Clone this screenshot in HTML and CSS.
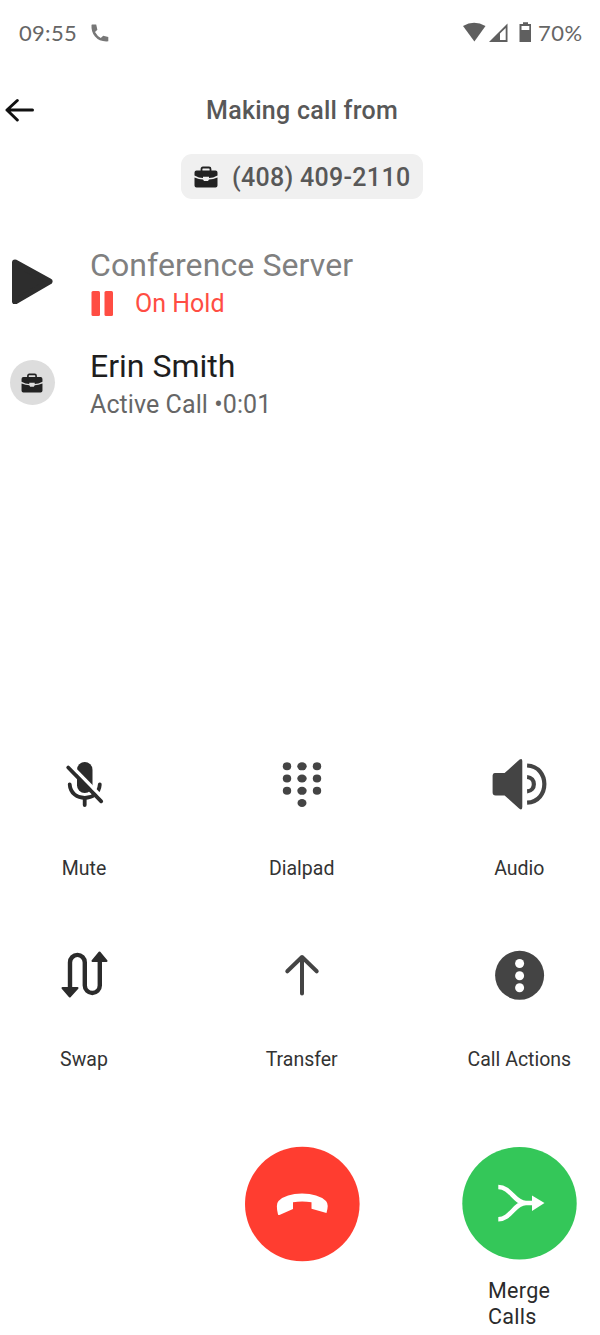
FILE: index.html
```html
<!DOCTYPE html>
<html lang="en">
<head>
<meta charset="utf-8">
<title>Call</title>
<link rel="stylesheet" href="styles.css">
</head>
<body>
<div class="screen">
  <div class="status">
    <div class="status-left">
      <span class="time">09:55</span>
      <svg class="phone" width="18" height="18" viewBox="0 0 18 18"><path d="M1 .5H5.200L6.400 5.800L4 8Q6.200 12 9.800 14L12.200 11.700L17.300 12.900V17.300Q8.500 18 4 12.500Q0 8 .5 1Z" fill="#777"/></svg>
    </div>
    <div class="status-right">
      <svg width="70" height="22" viewBox="462 22 70 22"><path d="M463 26Q474 19.500 485.500 26L474.400 41.500Z" fill="#5f5f5f"/><path d="M489 42L507.500 23.500V42Z" fill="#5f5f5f"/><path d="M500 33.500L505.700 28V40H500Z" fill="#fff"/><path d="M520 24H523V22.300H528V24H531V42H519.500V24Z" fill="#5f5f5f"/><path d="M521.500 26H529.300V30H521.500Z" fill="#fff"/></svg>
      <span class="percent">70%</span>
    </div>
  </div>
  <header class="header">
    <svg class="back" width="30" height="26" viewBox="5 96 30 26" fill="none" stroke="#111" stroke-width="3" stroke-linecap="round" stroke-linejoin="round"><path d="M32.500 109H7M17.300 99.500L7 109L17.300 119"/></svg>
    <h1 class="title">Making call from</h1>
  </header>
  <div class="chip">
    <svg width="24" height="22" viewBox="0 0 24 22"><path d="M7.500 5V3Q7.500 1.500 9 1.500H15Q16.500 1.500 16.500 3V5" fill="none" stroke="#222" stroke-width="1.800"/><path d="M2.500 4.500H21.500Q23.500 4.500 23.500 6.500V9.500Q19 12 15 12V10.800H9V12Q5 12 .5 9.500V6.500Q.5 4.500 2.500 4.500ZM.5 11.500Q5 13.300 9 13.500L10 15H14L15 13.500Q19 13.300 23.500 11.500V19.500Q23.500 21.500 21.500 21.500H2.500Q.5 21.500 .5 19.500Z" fill="#222"/></svg>
    <span class="number">(408) 409-2110</span>
  </div>
  <main class="calls">
    <div class="call">
      <div class="avatar"><svg class="play" width="44" height="46" viewBox="10 258 44 46"><path d="M15 262.500L49.500 281.500L15 301.500Z" fill="#2d2d2d" stroke="#2d2d2d" stroke-width="6" stroke-linejoin="round"/></svg></div>
      <div class="info">
        <div class="name held">Conference Server</div>
        <div class="hold"><svg width="24" height="27" viewBox="0 0 24 27" fill="#ff4d43"><rect x="1.500" y="1" width="8.500" height="25" rx="1.500"/><rect x="14.500" y="1" width="8.500" height="25" rx="1.500"/></svg><span class="hold-text">On Hold</span></div>
      </div>
    </div>
    <div class="call">
      <div class="avatar"><div class="badge"><svg width="22" height="20" viewBox="0 0 24 22"><path d="M7.500 5V3Q7.500 1.500 9 1.500H15Q16.500 1.500 16.500 3V5" fill="none" stroke="#222" stroke-width="1.800"/><path d="M2.500 4.500H21.500Q23.500 4.500 23.500 6.500V9.500Q19 12 15 12V10.800H9V12Q5 12 .5 9.500V6.500Q.5 4.500 2.500 4.500ZM.5 11.500Q5 13.300 9 13.500L10 15H14L15 13.500Q19 13.300 23.500 11.500V19.500Q23.500 21.500 21.500 21.500H2.500Q.5 21.500 .5 19.500Z" fill="#222"/></svg></div></div>
      <div class="info">
        <div class="name erin">Erin Smith</div>
        <div class="active">Active Call •0:01</div>
      </div>
    </div>
  </main>
  <section class="actions">
    <div class="action">
      <svg width="60" height="60" viewBox="54 755 60 60"><rect x="77" y="762" width="15.500" height="31" rx="7.700" fill="#2b2b2b"/><path d="M69.700 784.500C71 802.500 98.500 802.500 99.800 784.500M84.700 798V805" fill="none" stroke="#2b2b2b" stroke-width="3.800" stroke-linecap="round"/><path d="M70.500 765L103.500 798.700" stroke="#fff" stroke-width="3.500"/><path d="M68.200 767.500L101.200 801.300" stroke="#2b2b2b" stroke-width="3.800" stroke-linecap="round"/></svg>
      <span class="label mute">Mute</span>
    </div>
    <div class="action">
      <svg width="60" height="60" viewBox="272 755 60 60" fill="#444"><ellipse cx="287" cy="766.300" rx="4.200" ry="4"/><ellipse cx="302" cy="766.300" rx="4.700" ry="4"/><ellipse cx="317" cy="766.300" rx="4.200" ry="4"/><ellipse cx="287" cy="778.500" rx="4.200" ry="4"/><ellipse cx="302" cy="778.500" rx="4.700" ry="4"/><ellipse cx="317" cy="778.500" rx="4.200" ry="4"/><ellipse cx="287" cy="790.800" rx="4.200" ry="4"/><ellipse cx="302" cy="790.800" rx="4.700" ry="4"/><ellipse cx="317" cy="790.800" rx="4.200" ry="4"/><ellipse cx="302" cy="803" rx="4.500" ry="4"/></svg>
      <span class="label dialpad">Dialpad</span>
    </div>
    <div class="action">
      <svg width="60" height="60" viewBox="489.400 755 60 60"><path d="M495 773H505L520 759.500Q522.700 758 522.700 761V807Q522.700 811 519.500 808.500L505 795.500H496Q493 795.500 493 792.500V775.500Q493 773 495 773Z" fill="#444"/><path d="M527.500 765.500C550.500 766.500 550.500 801.700 527.500 802.700M527.500 777C536.500 777.500 536.500 790.800 527.500 791.300" fill="none" stroke="#444" stroke-width="4.200"/></svg>
      <span class="label audio">Audio</span>
    </div>
    <div class="action">
      <svg width="60" height="60" viewBox="54 945 60 60"><path d="M70 990V962.500A7.400 7.600 0 0 1 84.800 962.500V985.500A7.500 7.500 0 0 0 99.800 985.500V960" fill="none" stroke="#2b2b2b" stroke-width="4.400"/><path d="M62.500 988H77.500L69.800 996.500ZM92.500 961H106.500L99.500 952.500Z" fill="#2b2b2b" stroke="#2b2b2b" stroke-width="2" stroke-linejoin="round"/></svg>
      <span class="label swap">Swap</span>
    </div>
    <div class="action">
      <svg width="60" height="60" viewBox="272 945 60 60" fill="none" stroke="#444" stroke-width="4" stroke-linecap="round" stroke-linejoin="round"><path d="M302 993.500V957M287.300 971.300L302 957L316.700 971.300"/></svg>
      <span class="label transfer">Transfer</span>
    </div>
    <div class="action">
      <svg width="60" height="60" viewBox="489.400 945 60 60"><circle cx="520" cy="975.300" r="24.500" fill="#444"/><g fill="#fff"><circle cx="520" cy="963.500" r="4.500"/><circle cx="520" cy="975.700" r="4.500"/><circle cx="520" cy="987.800" r="4.500"/></g></svg>
      <span class="label more">Call Actions</span>
    </div>
  </section>
  <footer class="bottom">
    <div class="round">
      <svg width="116" height="116" viewBox="244 1146 116 116"><circle cx="302.300" cy="1204" r="57.300" fill="#ff3d30"/><path d="M278 1214.500Q275.500 1204 278.500 1201Q286 1193.500 302 1193.500Q318 1193.500 326 1201Q329 1204 326.500 1213L311.500 1208.700V1202.300Q302 1200.500 293 1202.300V1209L280 1214.700Q278.500 1215.500 278 1214.500Z" fill="#fff"/></svg>
    </div>
    <div class="round">
      <svg width="116" height="116" viewBox="461 1146 116 116"><ellipse cx="519.500" cy="1203.300" rx="57.200" ry="56.300" fill="#34c759"/><path d="M498.300 1187C511 1187 514 1203 526 1203H534M498.300 1219.300C511 1219.300 514 1203 526 1203" fill="none" stroke="#fff" stroke-width="4.600"/><path d="M532 1195.500L544.500 1203L532 1211Z" fill="#fff"/></svg>
      <span class="merge">Merge<br>Calls</span>
    </div>
  </footer>
</div>
</body>
</html>
```
FILE: styles.css
```css
* { box-sizing: border-box; }
body { margin: 0; background: #fff; font-family: Roboto, "Liberation Sans", sans-serif; }
svg { display: block; flex: none; }
.screen { width: 600px; height: 1335px; overflow: hidden; display: flex; flex-direction: column; background: #fff; }
.status { height: 66px; padding: 0 17px 0 19px; display: flex; justify-content: space-between; align-items: center; font-family: Lato, Roboto, sans-serif; color: #666; white-space: nowrap; }
.status-left, .status-right { display: flex; align-items: center; }
.time { font-size: 22px; line-height: 26px; width: 58px; letter-spacing: 0.3px; }
.phone { margin-left: 14px; }
.percent { font-size: 22px; line-height: 26px; margin-left: 6px; width: 45px; letter-spacing: 0.5px; }
.header { height: 88px; padding: 0 5px; display: grid; grid-template-columns: 30px 1fr 30px; align-items: center; }
.back { margin-top: -1px; }
.title { margin: 2px 0 0 4px; font-size: 25px; line-height: 34px; font-weight: 500; color: #585858; letter-spacing: 0.25px; text-align: center; white-space: nowrap; }
.chip { width: 242px; height: 45px; margin-left: 181px; padding-left: 13px; border-radius: 11px; background: #f0f0f0; display: flex; align-items: center; gap: 14px; }
.number { font-size: 25px; line-height: 34px; font-weight: 500; color: #585858; letter-spacing: 0.3px; white-space: nowrap; margin-top: 2px; }
.calls { height: 531px; padding: 45.500px 0 0 10px; display: flex; flex-direction: column; gap: 25.500px; }
.call { height: 76px; display: flex; gap: 36px; white-space: nowrap; }
.avatar { width: 44px; display: flex; justify-content: center; align-items: center; flex: none; }
.play { margin-top: -4px; }
.badge { width: 45px; height: 45px; border-radius: 50%; background: #ddd; display: flex; align-items: center; justify-content: center; flex: none; margin-top: -3px; }
.name { font-size: 32px; line-height: 40px; color: #1e1e1e; }
.held { color: #808080; letter-spacing: 0.1px; }
.hold { display: flex; align-items: center; gap: 21px; margin-top: 1.500px; height: 34px; color: #ff4d43; }
.hold-text, .active { font-size: 25px; line-height: 34px; }
.hold-text { margin-top: 1px; }
.active { margin-top: 2px; color: #666; letter-spacing: 0.08px; }
.actions { margin-left: 29px; height: 390px; padding-top: 25px; display: grid; grid-template-columns: repeat(3, 110px); grid-auto-rows: 130px; column-gap: 107.700px; row-gap: 60px; align-content: start; }
.action { display: flex; flex-direction: column; align-items: center; gap: 41px; }
.action:nth-child(n+4) { gap: 42px; }
.label { font-size: 19.500px; line-height: 26px; color: #333; white-space: nowrap; }
.bottom { margin: 26px 0 0 244px; display: flex; gap: 101px; }
.round { width: 116px; display: flex; flex-direction: column; }
.merge { margin: 16px 0 0 27px; font-size: 21.500px; line-height: 26px; color: #2b2b2b; letter-spacing: 0.3px; }
```
